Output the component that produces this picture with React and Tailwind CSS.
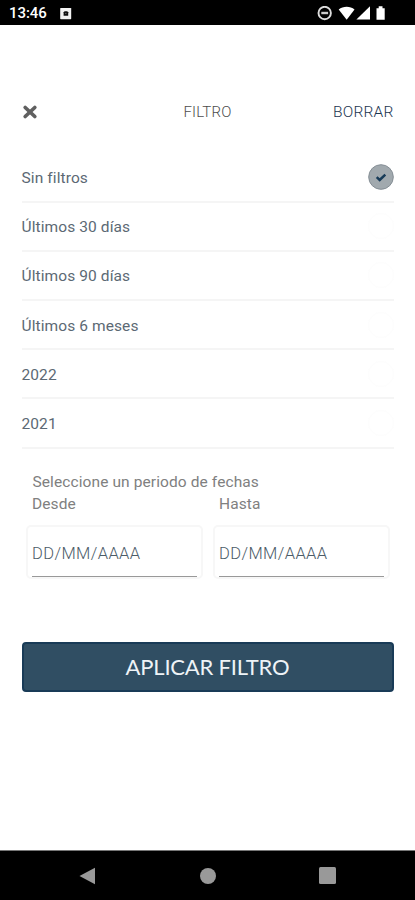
const OPTIONS = [
  'Sin filtros',
  'Últimos 30 días',
  'Últimos 90 días',
  'Últimos 6 meses',
  '2022',
  '2021',
];

function StatusBar() {
  return (
    <div className="flex h-[25px] shrink-0 items-center bg-black pt-[2px] text-white">
      <span className="ml-[9px] w-[38px] text-[15px] leading-none font-medium tracking-[-0.05px]">13:46</span>
      <svg className="ml-[13px]" width="12" height="12" viewBox="0 0 12 12">
        <rect x="0.2" y="0" width="11" height="11.2" rx="0.6" fill="#f3f3f3" />
        <path d="M3.600 7.700V4.300l1-1.100h2.600l1 1.100v3.400z" fill="#111" />
        <rect x="5.200" y="4.900" width="1.200" height="1" fill="#777" />
      </svg>
      <div className="ml-auto mr-[28px] flex items-center">
        <svg width="70" height="15" viewBox="0 0 70 15" fill="#fff">
          <circle cx="7.7" cy="7" r="6.2" fill="none" stroke="#ddd" strokeWidth="1.9" />
          <rect x="4.3" y="5.8" width="6.8" height="2.4" fill="#ccc" />
          <path d="M21.7 3.6C26-.2 33.400-.2 37.500 3.6L29.700 13.8z" />
          <path d="M53 0.3V13.6H39.400z" />
          <path d="M59.500 2.2h2.200V.2h3.800v2h2.200v11.6h-8.200z" />
        </svg>
      </div>
    </div>
  );
}

function Header() {
  return (
    <header className="grid h-5 grid-cols-3 items-center text-[15px] leading-5">
      <svg width="16" height="16" viewBox="0 0 16 16">
        <path d="M3.2 3.5L12.8 12.5M12.8 3.5L3.2 12.5" stroke="#606060" strokeWidth="3.7" strokeLinecap="round" />
      </svg>
      <span className="text-center font-light tracking-[0.2px] text-[#4d4d4d]">FILTRO</span>
      <span className="text-right text-[15.5px] font-light tracking-[0.2px] text-[#1b3550]">BORRAR</span>
    </header>
  );
}

function OptionRow({ label, selected }) {
  return (
    <li className="flex h-[49.2px] items-center justify-between border-b-2 border-[#f5f5f5] text-[#5c6974]">
      <span className="pt-[2px] text-[15.5px] leading-5 tracking-[0.1px]">{label}</span>
      {selected ? (
        <svg width="26" height="26" viewBox="0 0 26 26">
          <circle cx="13" cy="13" r="12.3" fill="#a1a9ae" stroke="#858e95" />
          <path d="M8.7 13.2L11.7 16L17.3 10.7" fill="none" stroke="#173b58" strokeWidth="2.5" />
        </svg>
      ) : (
        <span className="size-[26px] rounded-full border border-[#fdfdfd]" />
      )}
    </li>
  );
}

function DateField({ label }) {
  return (
    <label className="flex w-[177px] flex-col">
      <span className="ml-[6px] text-[15.5px] leading-[22px] tracking-[0.1px] text-[#808080]">{label}</span>
      <span className="mt-[10px] flex h-[54px] flex-col justify-end rounded-[5px] border-2 border-[#f7f7f7] px-[4px]">
        <span className="flex h-[34px] items-start border-b border-[#999] pt-[1px] text-[16.5px] leading-5 font-light tracking-[0.4px] text-[#4c5c68]">
          DD/MM/AAAA
        </span>
      </span>
    </label>
  );
}

function NavigationBar() {
  return (
    <nav className="mt-auto flex h-[50px] shrink-0 items-center justify-between border-t border-[#777] bg-black px-[79px]">
      <svg width="17" height="18" viewBox="0 0 17 18">
        <path d="M0.5 9L16 0.7V17.3z" fill="#999" />
      </svg>
      <span className="size-[16px] rounded-full bg-[#999]" />
      <span className="size-[17px] rounded-[1.5px] bg-[#999]" />
    </nav>
  );
}

export default function App() {
  return (
    <div className="flex h-[900px] w-[415px] flex-col overflow-hidden bg-white font-['Roboto',sans-serif]">
      <StatusBar />
      <main className="flex flex-col px-[21.5px] pt-[77px]">
        <Header />
        <ul className="mt-[31.5px]">
          {OPTIONS.map((label, i) => (
            <OptionRow key={label} label={label} selected={i === 0} />
          ))}
        </ul>
        <section className="mt-[22.3px] ml-[4.5px]">
          <p className="ml-[6.5px] text-[15.5px] leading-[22px] tracking-[0.1px] text-[#808080]">
            Seleccione un periodo de fechas
          </p>
          <div className="flex gap-[10px]">
            <DateField label="Desde" />
            <DateField label="Hasta" />
          </div>
        </section>
        <button className="mt-[63px] h-[50px] rounded-[4px] border-2 border-[#193b57] bg-[#304e63] font-['Lato',sans-serif] text-[22px] leading-none tracking-[-0.2px] text-[#eef3f7]">
          APLICAR FILTRO
        </button>
      </main>
      <NavigationBar />
    </div>
  );
}
